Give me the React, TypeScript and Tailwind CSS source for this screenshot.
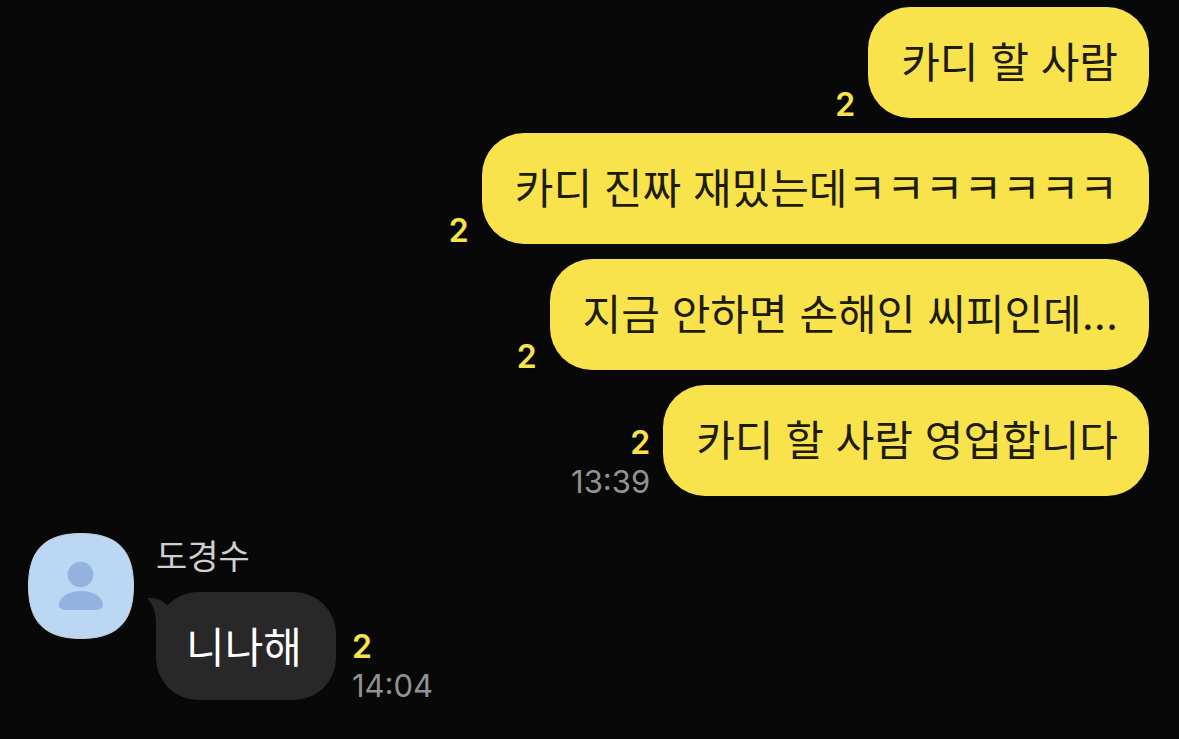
import React from 'react';

interface SentMessage {
  text: string;
  unread: number;
  time?: string;
}

interface MessageMetaProps {
  unread: number;
  time?: string;
  align: 'left' | 'right';
}

const sentMessages: SentMessage[] = [
  { text: '카디 할 사람', unread: 2 },
  { text: '카디 진짜 재밌는데ㅋㅋㅋㅋㅋㅋㅋ', unread: 2 },
  { text: '지금 안하면 손해인 씨피인데...', unread: 2 },
  { text: '카디 할 사람 영업합니다', unread: 2, time: '13:39' },
];

const MessageMeta: React.FC<MessageMetaProps> = ({ unread, time, align }) => (
  <div className={`flex shrink-0 flex-col ${align === 'right' ? 'items-end' : 'items-start'}`}>
    <span className="text-[32px] leading-[26px] font-semibold text-[#f8e34c]">{unread}</span>
    {time && <time className="mt-3 text-[31px] leading-7 text-[#929292]">{time}</time>}
  </div>
);

const Avatar: React.FC = () => (
  <svg viewBox="0 0 106 106" className="size-[106px] shrink-0" aria-hidden="true">
    <path
      d="M53 .5C89 .5 105.500 17 105.500 53S89 105.500 53 105.500.500 89 .500 53 17 .500 53 .500Z"
      fill="#bcd7f3"
      stroke="#c9d3d8"
    />
    <circle cx="52.500" cy="41.500" r="12.800" fill="#93b2e0" />
    <path
      d="M53 58c13 0 22 7 22 13.500 0 4-3 5.500-8 5.500H39c-5 0-8-1.500-8-5.500C31 65 40 58 53 58Z"
      fill="#93b2e0"
    />
  </svg>
);

const BubbleTail: React.FC = () => (
  <svg viewBox="0 0 32 40" className="absolute top-1 -left-[9px] h-10 w-8" aria-hidden="true">
    <path d="M0 2C8 1 15 4 20 9L32 14V40H9V28C9 17 6 8 0 2Z" fill="#282828" />
  </svg>
);

export default function App() {
  return (
    <main className="min-h-screen bg-[#080808] pt-[7px] pr-[30px] pb-10 pl-7 font-['Inter','Noto_Sans_CJK_KR',sans-serif]">
      {/* Sent messages */}
      <ul className="flex flex-col gap-[15px]">
        {sentMessages.map((message) => (
          <li key={message.text} className="flex items-end justify-end gap-[13px]">
            <MessageMeta unread={message.unread} time={message.time} align="right" />
            <p className="rounded-[42px] bg-[#f8e34c] pt-7 pr-[31px] pb-[27px] pl-[33px] text-[42px] leading-14 text-[#1e1c08]">
              {message.text}
            </p>
          </li>
        ))}
      </ul>

      {/* Received message */}
      <section className="mt-[37px] flex items-start gap-[22px]">
        <Avatar />
        <div>
          <h2 className="text-[34px] leading-12 text-[#cfcfcf]">도경수</h2>
          <div className="mt-[11px] flex items-end gap-4">
            <div className="relative">
              <BubbleTail />
              <p className="relative rounded-[42px] bg-[#282828] pt-7 pr-[34px] pb-6 pl-[30px] text-[42px] leading-14 text-white">
                니나해
              </p>
            </div>
            <MessageMeta unread={2} time="14:04" align="left" />
          </div>
        </div>
      </section>
    </main>
  );
}
